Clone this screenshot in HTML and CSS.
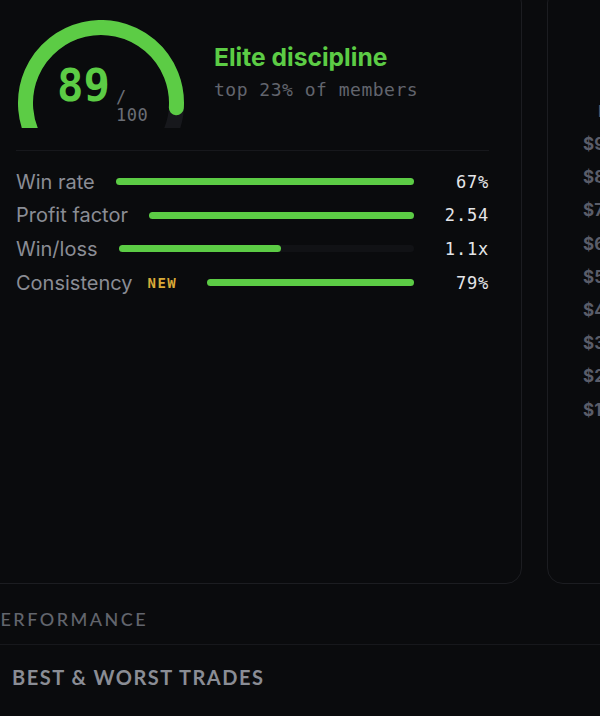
FILE: index.html
```html
<!DOCTYPE html>
<html lang="en">
<head>
    <meta charset="UTF-8">
    <meta name="viewport" content="width=device-width, initial-scale=1">
    <title>Performance</title>
    <link rel="stylesheet" href="styles.css">
</head>
<body>
    <div class="page">
        <div class="cards">
            <div class="card">
                <div class="score">
                    <div class="gauge">
                        <svg class="gauge-arc" width="170" height="108" viewBox="0 0 170 108">
                            <path d="M19.62 120.75 A75.5 75.5 0 1 1 150.38 120.75" fill="none" stroke="#17181c" stroke-width="15" stroke-linecap="round"/>
                            <path d="M19.62 120.75 A75.5 75.5 0 1 1 160.35 87.74" fill="none" stroke="#5ccc45" stroke-width="15" stroke-linecap="round"/>
                        </svg>
                        <div class="gauge-value">
                            <span class="gauge-num">89</span>
                            <span class="gauge-max">/<br>100</span>
                        </div>
                    </div>
                    <div class="score-text">
                        <h2>Elite discipline</h2>
                        <p>top 23% of members</p>
                    </div>
                </div>

                <div class="metrics">
                    <div class="metric">
                        <span class="metric-label">Win rate</span>
                        <div class="bar"><div class="bar-fill" style="width: 100%"></div></div>
                        <span class="metric-value">67%</span>
                    </div>
                    <div class="metric">
                        <span class="metric-label">Profit factor</span>
                        <div class="bar"><div class="bar-fill" style="width: 100%"></div></div>
                        <span class="metric-value">2.54</span>
                    </div>
                    <div class="metric">
                        <span class="metric-label">Win/loss</span>
                        <div class="bar"><div class="bar-fill" style="width: 55%"></div></div>
                        <span class="metric-value">1.1x</span>
                    </div>
                    <div class="metric">
                        <span class="metric-label">Consistency</span>
                        <span class="badge">NEW</span>
                        <div class="bar wide-gap"><div class="bar-fill" style="width: 100%"></div></div>
                        <span class="metric-value">79%</span>
                    </div>
                </div>
            </div>

            <div class="card">
                <div class="chart-head">Balance</div>
                <div class="chart-axis">
                    <span>$900</span>
                    <span>$800</span>
                    <span>$700</span>
                    <span>$600</span>
                    <span>$500</span>
                    <span>$400</span>
                    <span>$300</span>
                    <span>$200</span>
                    <span>$100</span>
                </div>
            </div>
        </div>

        <h3 class="section-title">Performance</h3>
        <h3 class="section-title strong">Best &amp; Worst Trades</h3>
    </div>
</body>
</html>
```

FILE: styles.css
```css
body {
    margin: 0;
    background-color: #0a0b0d;
    font-family: Inter, "Noto Sans", sans-serif;
    color: #8a8d95;
    overflow: hidden;
    height: 716px;
}
.page {
    margin-left: -17px;
    width: 760px;
}
.cards {
    display: grid;
    grid-template-columns: 539px 1fr;
    gap: 25px;
    margin-top: -13px;
}
.card {
    border: 1px solid #1c1d21;
    border-radius: 16px;
    padding: 32px;
    height: 531px;
}

/* score gauge */
.score {
    display: flex;
    align-items: center;
    gap: 28px;
}
.gauge {
    position: relative;
    width: 170px;
    height: 108px;
}
.gauge-arc {
    display: block;
}
.gauge-value {
    position: absolute;
    left: 41px;
    top: 40px;
    display: flex;
    align-items: flex-start;
    font-family: "DejaVu Sans Mono", monospace;
}
.gauge-num {
    font-size: 44px;
    font-weight: bold;
    line-height: 52px;
    color: #5ccc45;
}
.gauge-max {
    font-size: 17px;
    line-height: 18px;
    color: #6b6e76;
    margin-left: 6px;
    margin-top: 28px;
    letter-spacing: 0.5px;
}
.score-text {
    margin-top: -6px;
}
.score-text h2 {
    margin: 0 0 7px;
    font-size: 24.6px;
    font-weight: 700;
    color: #5ccc45;
}
.score-text p {
    margin: 0;
    font-family: "DejaVu Sans Mono", monospace;
    font-size: 18px;
    letter-spacing: 0.5px;
    color: #62656d;
}

/* metric rows */
.metrics {
    border-top: 1px solid #17181c;
    margin-top: 22px;
    padding-top: 14px;
}
.metric {
    display: flex;
    align-items: center;
    height: 33.6px;
}
.metric-label {
    font-size: 20px;
}
.badge {
    margin-left: 15px;
    font-family: "DejaVu Sans Mono", monospace;
    font-size: 14px;
    font-weight: bold;
    letter-spacing: 1.5px;
    color: #d9aa38;
}
.bar {
    flex: 1;
    height: 7px;
    margin-left: 21px;
    border-radius: 4px;
    background-color: #111215;
}
.bar.wide-gap {
    margin-left: 30px;
}
.bar-fill {
    height: 100%;
    border-radius: 4px;
    background-color: #5ccc45;
}
.metric-value {
    width: 75px;
    text-align: right;
    font-family: "DejaVu Sans Mono", monospace;
    font-size: 17px;
    letter-spacing: 0.8px;
    color: #e4e5e8;
}

/* chart axis */
.chart-head {
    margin: 84px 0 0 18px;
    line-height: 14px;
    font-size: 16px;
    font-weight: 600;
    color: #5a5d69;
}
.chart-axis {
    display: flex;
    flex-direction: column;
    margin-top: 10px;
    padding-left: 3px;
}
.chart-axis span {
    line-height: 33.2px;
    font-size: 17px;
    font-weight: 700;
    color: #5a5d69;
}

/* section headings */
.section-title {
    margin: 0;
    padding: 25px 4px 15px;
    line-height: 20px;
    font-family: Lato, sans-serif;
    font-size: 18px;
    font-weight: 500;
    letter-spacing: 2.5px;
    text-transform: uppercase;
    color: #62656d;
    border-bottom: 1px solid #17181c;
}
.section-title.strong {
    padding: 22px 29px;
    font-size: 20px;
    font-weight: 700;
    letter-spacing: 1.5px;
    color: #8a8d95;
    border-bottom: none;
}
```
